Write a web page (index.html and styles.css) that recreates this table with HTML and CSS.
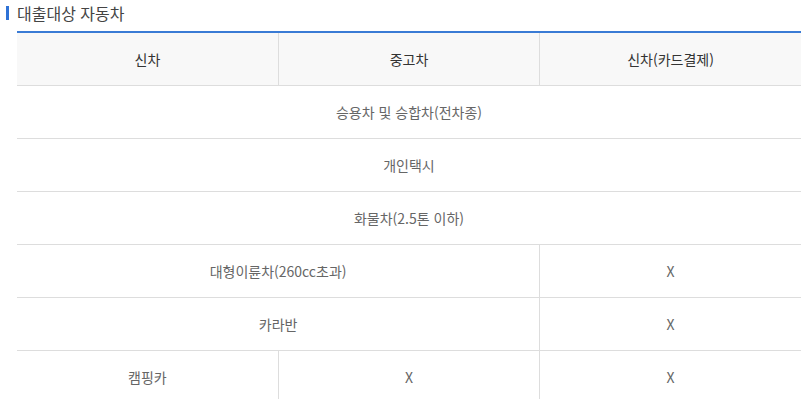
FILE: index.html
```html
<!DOCTYPE html>
<html lang="ko">
<head>
<meta charset="utf-8">
<link rel="stylesheet" href="styles.css">
</head>
<body>
<div class="wrap">
  <h3 class="title">대출대상 자동차</h3>
  <table class="tbl">
    <colgroup><col class="c"><col class="c"><col class="c"></colgroup>
    <thead>
      <tr><th>신차</th><th>중고차</th><th>신차(카드결제)</th></tr>
    </thead>
    <tbody>
      <tr><td colspan="3">승용차 및 승합차(전차종)</td></tr>
      <tr><td colspan="3">개인택시</td></tr>
      <tr><td colspan="3">화물차(2.5톤 이하)</td></tr>
      <tr><td colspan="2">대형이륜차(260cc초과)</td><td>X</td></tr>
      <tr><td colspan="2">카라반</td><td>X</td></tr>
      <tr><td>캠핑카</td><td>X</td><td>X</td></tr>
    </tbody>
  </table>
</div>
</body>
</html>
```
FILE: styles.css
```css
html, body { margin: 0; padding: 0; background: #fff; }
body { font-family: "Noto Sans CJK KR", "Noto Sans", sans-serif; }
.wrap { padding: 4px 8px 0 17px; }
.title {
  position: relative;
  margin: 0 0 9px 0;
  font-size: 16px;
  font-weight: 400;
  color: #444;
  line-height: 18px;
  height: 18px;
}
.title::before {
  content: "";
  position: absolute;
  left: -11px;
  top: 2px;
  width: 3px;
  height: 14px;
  background: #2f72d6;
}
.tbl {
  width: 784px;
  border-collapse: collapse;
  table-layout: fixed;
  border-top: 2px solid #3a7bd5;
}
.tbl th, .tbl td {
  height: 52px;
  padding: 0;
  text-align: center;
  font-size: 14px;
  border-bottom: 1px solid #dddddd;
  border-left: 1px solid #dddddd;
}
.tbl th:first-child, .tbl td:first-child { border-left: none; }
.tbl th { background: #f8f8f8; color: #333; font-weight: 400; }
.tbl td { color: #666; }
```
